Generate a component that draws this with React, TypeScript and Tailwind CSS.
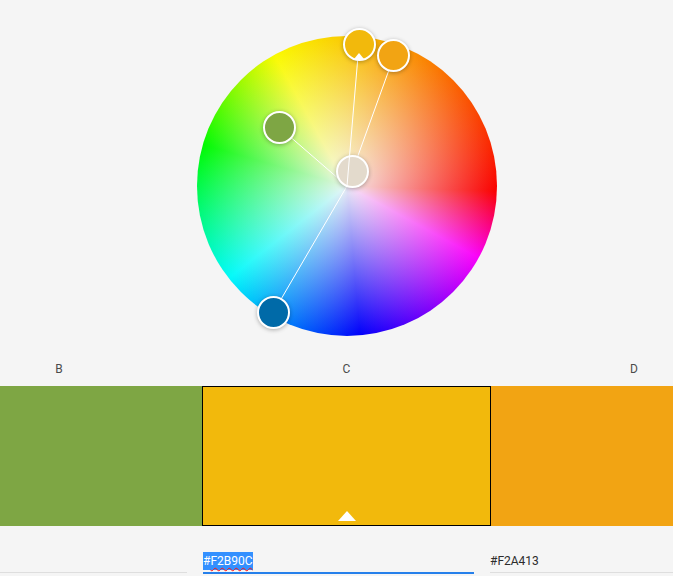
const LABELS = ["B", "C", "D"];

const LINES = [
  { x: 83, y: 92 },
  { x: 197, y: 20 },
  { x: 76, y: 277 },
];

function ColorWheel() {
  return (
    <div className="relative mx-auto mt-9 h-[300px] w-[300px] rounded-full bg-[radial-gradient(circle_closest-side,rgba(245,245,245,0.95),rgba(245,245,245,0.78)_18%,rgba(245,245,245,0.48)_50%,rgba(245,245,245,0)_100%),conic-gradient(#fac800_0deg,#fa0000_92deg,#fa00fa_118.6deg,#0000fa_175deg,#00fafa_232deg,#00fa00_286deg,#fafa00_331deg,#fac800_360deg)]">
      <svg className="absolute inset-0 h-full w-full overflow-visible" viewBox="0 0 300 300">
        {LINES.map((l) => (
          <line key={l.x} x1={l.x} y1={l.y} x2="150" y2="150" stroke="#fff" strokeWidth="1" />
        ))}
      </svg>

      <div className="absolute left-[139px] top-[119px] h-[33px] w-[33px] rounded-full border-2 border-white bg-[#e3dacc] shadow-[0_1px_4px_rgba(0,0,0,0.3)]" />
      <svg className="absolute inset-0 h-full w-full overflow-visible" viewBox="0 0 300 300">
        <line x1="162" y1="8" x2="150" y2="150" stroke="#fff" strokeWidth="1" />
      </svg>

      <div className="absolute left-[66px] top-[75px] h-[33px] w-[33px] rounded-full border-2 border-white bg-[#7ea644] shadow-[0_1px_4px_rgba(0,0,0,0.3)]" />
      <div className="absolute left-[180px] top-[3px] h-[33px] w-[33px] rounded-full border-2 border-white bg-[#f2a413] shadow-[0_1px_4px_rgba(0,0,0,0.3)]" />
      <div className="absolute left-[146px] top-[-8px] flex h-[33px] w-[33px] items-end justify-center rounded-full border-2 border-white bg-[#f2b90c] shadow-[0_1px_4px_rgba(0,0,0,0.3)]">
        <div className="h-0 w-0 border-x-[5px] border-b-[6px] border-x-transparent border-b-white" />
      </div>
      <div className="absolute left-[60px] top-[260px] h-[33px] w-[33px] rounded-full border-2 border-white bg-[#006aa8] shadow-[0_1px_4px_rgba(0,0,0,0.3)]" />
    </div>
  );
}

export default function App() {
  return (
    <div className="h-[576px] w-[673px] overflow-hidden bg-[#f5f5f5] font-['Roboto',sans-serif]">
      <div className="ml-[-87px] w-[867px]">
        <ColorWheel />

        <div className="mt-[25px] mb-[9px] flex justify-center text-xs leading-4 text-[#4b4b4b]">
          {LABELS.map((label) => (
            <div key={label} className="w-[287.5px] text-center">
              {label}
            </div>
          ))}
        </div>

        <div className="flex h-[140px]">
          <div className="w-[289px] bg-[#7ea644]" />
          <div className="flex w-[289px] items-end justify-center border border-black bg-[#f2b90c] pb-[4px]">
            <div className="h-0 w-0 border-x-[9px] border-b-[10px] border-x-transparent border-b-white" />
          </div>
          <div className="w-[289px] bg-[#f2a413]" />
        </div>

        <div className="mt-[26px] flex text-xs leading-[18px] text-[#2c2c2c]">
          <div className="w-[289px]">
            <div className="mt-5 h-px w-[274px] bg-[#dedede]" />
          </div>
          <div className="w-[289px] pl-px">
            <div className="h-5 w-[271px]">
              <span className="inline-block h-[18px] w-[50px] bg-[#3390ff] text-white">
                #<span className="underline decoration-[#ff1010] decoration-wavy decoration-1 underline-offset-2">F2B90C</span>
              </span>
            </div>
            <div className="h-[2px] w-[271px] bg-[#2680eb]" />
          </div>
          <div className="ml-[-1px] w-[289px]">
            <div className="h-5 w-[271px]">#F2A413</div>
            <div className="h-px w-[271px] bg-[#dedede]" />
          </div>
        </div>
      </div>
    </div>
  );
}
